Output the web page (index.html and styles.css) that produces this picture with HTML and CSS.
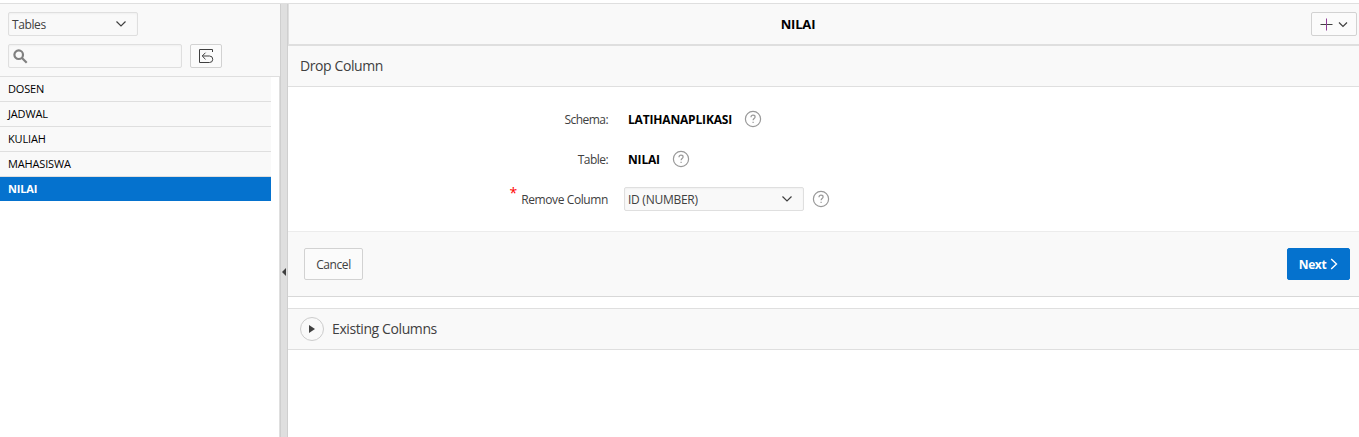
FILE: index.html
```html
<!DOCTYPE html>
<html lang="en">
<head>
<meta charset="utf-8">
<title>Object Browser</title>
<link rel="stylesheet" href="styles.css">
</head>
<body>
<div class="app">
  <aside class="sidebar">
    <div class="filters">
      <div class="select select-type"><span>Tables</span>
        <svg class="chev" width="12" height="8" viewBox="0 0 12 8"><path d="M1.5 1.5 6 6l4.500-4.500"/></svg>
      </div>
      <div class="search-row">
        <div class="search">
          <svg width="16" height="16" viewBox="0 0 16 16"><circle cx="5.700" cy="5.700" r="4.300"/><path d="m9 9 4.700 4.700"/></svg>
        </div>
        <div class="btn btn-refresh">
          <svg width="16" height="16" viewBox="0 0 16 16"><path d="M14.500 4V1.500h-13v13h10a3.200 3.200 0 0 0 0-6.500H4.500M7.500 4.700 4.200 8l3.300 3.300"/></svg>
        </div>
      </div>
    </div>
    <ul class="list">
      <li>DOSEN</li>
      <li>JADWAL</li>
      <li>KULIAH</li>
      <li>MAHASISWA</li>
      <li class="current">NILAI</li>
    </ul>
  </aside>
  <div class="splitter"><svg width="4" height="8" viewBox="0 0 4 8"><path d="M4 0v8L0 4z"/></svg></div>
  <main class="main">
    <header class="header">
      <h1>NILAI</h1>
      <div class="btn btn-add">
        <svg width="13" height="13" viewBox="0 0 13 13"><path class="plus-h" d="M.5 6.500h12"/><path class="plus-v" d="M6.500.5v12"/></svg>
        <svg class="chev" width="10" height="7" viewBox="0 0 10 7"><path d="M1 1.500 5 5.500l4-4"/></svg>
      </div>
    </header>
    <section>
      <h2 class="title">Drop Column</h2>
      <div class="form">
        <div class="field">
          <label><span class="schema">Schema:</span></label>
          <b>LATIHANAPLIKASI</b>
          <svg class="help" width="18" height="18" viewBox="0 0 18 18"><circle cx="9" cy="9" r="7.600"/><path d="M7 7.200c0-1.300.9-2 2-2s2.100.7 2.100 1.800c0 1.500-2 1.600-2 3.200M9.100 11.700v1.400"/></svg>
        </div>
        <div class="field">
          <label><span class="schema">Table:</span></label>
          <b>NILAI</b>
          <svg class="help" width="18" height="18" viewBox="0 0 18 18"><circle cx="9" cy="9" r="7.600"/><path d="M7 7.200c0-1.300.9-2 2-2s2.100.7 2.100 1.800c0 1.500-2 1.600-2 3.200M9.100 11.700v1.400"/></svg>
        </div>
        <div class="field">
          <label><i class="req">*</i><span>Remove Column</span></label>
          <div class="select select-col"><span>ID (NUMBER)</span>
            <svg class="chev" width="12" height="8" viewBox="0 0 12 8"><path d="M1.500 1.500 6 6l4.500-4.500"/></svg>
          </div>
          <svg class="help help-col" width="18" height="18" viewBox="0 0 18 18"><circle cx="9" cy="9" r="7.600"/><path d="M7 7.200c0-1.300.9-2 2-2s2.100.7 2.100 1.800c0 1.500-2 1.600-2 3.200M9.100 11.700v1.400"/></svg>
        </div>
      </div>
      <div class="actions">
        <div class="btn btn-cancel"><span>Cancel</span></div>
        <div class="btn btn-next"><span>Next</span>
          <svg width="8" height="12" viewBox="0 0 8 12"><path d="M1.200 1 6.500 6l-5.300 5"/></svg>
        </div>
      </div>
    </section>
    <section class="existing">
      <div class="toggle"><svg width="6" height="8" viewBox="0 0 6 8"><path d="M0 0v8l6-4z"/></svg></div>
      <h2>Existing Columns</h2>
    </section>
  </main>
</div>
</body>
</html>
```

FILE: styles.css
```css
* { box-sizing: border-box; }
body {
  margin: 0;
  background: #fff;
  color: #404040;
  font: 12px/16px "Open Sans", "Noto Sans", sans-serif;
  overflow: hidden;
}
svg { display: block; flex: none; fill: none; stroke: #404040; }
span, b, h1, h2 { white-space: nowrap; }
span { padding-top: 2px; letter-spacing: -.4px; }
h1, h2 { margin: 0; font-weight: 400; }
.app {
  display: flex;
  height: 434px;
  margin-top: 3px;
  border-top: 1px solid #dfdfdf;
}

.sidebar { width: 280px; flex: none; display: flex; flex-direction: column; background: #fff; }
.filters {
  height: 73px;
  padding: 8px 0 0 8px;
  background: #f9f9f9;
  border-bottom: 1px solid #dfdfdf;
}
.select {
  display: flex;
  align-items: center;
  justify-content: space-between;
  height: 24px;
  background: #f9f9f9;
  border: 1px solid #dfdfdf;
  border-radius: 2px;
  box-shadow: inset 0 1px 2px rgba(0, 0, 0, .04);
}
.select-type { width: 130px; padding: 0 10px 0 3px; }
.chev { stroke-width: 1.2; }
.search-row { display: flex; gap: 8px; margin-top: 8px; }
.search {
  width: 174px;
  height: 24px;
  padding: 4px;
  border: 1px solid #dfdfdf;
  border-radius: 2px;
  box-shadow: inset 0 1px 2px rgba(0, 0, 0, .04);
}
.search svg { stroke: #808080; stroke-width: 2.2; }
.btn {
  display: flex;
  align-items: center;
  justify-content: center;
  border: 1px solid #d2d2d2;
  border-radius: 2px;
  background: #fbfbfb;
}
.btn-refresh { width: 32px; height: 24px; }

.list {
  flex: 1;
  margin: 0;
  padding: 0 8px 0 0;
  list-style: none;
  border-right: 1px solid #dfdfdf;
  font-size: 11px;
  letter-spacing: -.15px;
  color: #000;
}
.list li {
  height: 25px;
  padding: 4px 8px;
  background: #f9f9f9;
  border-bottom: 1px solid #dfdfdf;
}
.list .current {
  height: 24px;
  border: 0;
  background: #0572ce;
  color: #fff;
  font-weight: 700;
}

.splitter {
  width: 8px;
  flex: none;
  display: flex;
  justify-content: center;
  padding-top: 264px;
  background: #dfdfdf;
  border: solid #cfcfcf;
  border-width: 0 1px;
}
.splitter svg { fill: #404040; stroke: none; }

.main { flex: 1; min-width: 0; }
.header {
  display: grid;
  grid-template-columns: 1fr auto 1fr;
  align-items: center;
  height: 42px;
  padding-right: 2px;
  background: #f9f9f9;
  border-bottom: 2px solid #dfdfdf;
  border-left: 1px solid #dfdfdf;
}
.header h1 {
  grid-column: 2;
  padding-right: 50px;
  font-size: 13px;
  font-weight: 700;
  color: #000;
  letter-spacing: -.2px;
}
.btn-add { justify-self: end; width: 46px; height: 24px; gap: 5px; }
.plus-v { stroke: #8f3c96; }
.title {
  height: 41px;
  padding: 10px 12px;
  background: #f9f9f9;
  border-bottom: 1px solid #dfdfdf;
}
h2 { font-size: 14px; line-height: 20px; letter-spacing: -.4px; }
.form {
  display: flex;
  flex-direction: column;
  gap: 16px;
  height: 144px;
  padding-top: 20px;
}
.field { display: flex; align-items: center; height: 24px; }
.field label { width: 320px; margin-right: 16px; display: flex; justify-content: flex-end; }
.field b { margin-left: 4px; padding-top: 2px; color: #000; letter-spacing: -.17px; }
.schema { letter-spacing: -.55px; }
.help { margin-left: 12px; stroke: #999; stroke-width: 1.2; }
.help-col { margin-left: 8px; }
.req { margin: -5px 4px 0 0; color: #f00; font-size: 14px; font-style: normal; }
.select-col { width: 180px; padding: 0 10px 0 3px; }
.select-col span { letter-spacing: -.27px; }
.actions {
  display: flex;
  align-items: flex-start;
  justify-content: space-between;
  height: 66px;
  padding: 16px 9px 0 16px;
  background: #f9f9f9;
  border-top: 1px solid #ececec;
  border-bottom: 1px solid #d8d8d8;
}
.btn-cancel { width: 59px; height: 32px; }
.btn-next {
  width: 63px;
  height: 32px;
  gap: 4px;
  background: #0572ce;
  border-color: #0572ce;
  color: #fff;
  font-weight: 700;
}
.btn-next svg { stroke: #fff; stroke-width: 1.4; }
.existing {
  display: flex;
  align-items: center;
  gap: 8px;
  height: 42px;
  margin-top: 11px;
  padding-left: 12px;
  background: #f9f9f9;
  border: solid #dfdfdf;
  border-width: 1px 0;
}
.toggle {
  display: flex;
  align-items: center;
  justify-content: center;
  width: 24px;
  height: 24px;
  border: 1px solid #ccc;
  border-radius: 50%;
}
.toggle svg { fill: #404040; stroke: none; }
```
